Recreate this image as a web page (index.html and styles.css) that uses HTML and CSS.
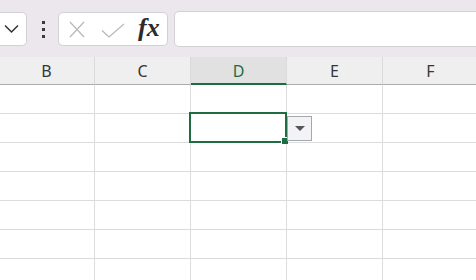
FILE: index.html
```html
<!DOCTYPE html>
<html lang="en">

<head>
    <meta charset="UTF-8">
    <meta name="viewport" content="width=device-width, initial-scale=1.0">
    <title>Sheet</title>
    <link rel="stylesheet" href="styles.css">
</head>

<body>

    <div class="toolbar">
        <div class="name-box">
            <svg width="16" height="10" viewBox="0 0 16 10">
                <polyline points="1,1.5 7.5,8 14,1.5" fill="none" stroke="#333" stroke-width="1.5" />
            </svg>
        </div>
        <div class="more-dots">
            <span></span><span></span><span></span>
        </div>
        <div class="fx-box">
            <svg class="icon-cancel" width="16" height="17" viewBox="0 0 16 17">
                <path d="M1 1 L15 16 M15 1 L1 16" stroke="#b9b9b9" stroke-width="1.3" fill="none" />
            </svg>
            <svg class="icon-enter" width="24" height="15" viewBox="0 0 24 15">
                <polyline points="1,7.5 8,14 23,1" fill="none" stroke="#b9b9b9" stroke-width="1.3" />
            </svg>
            <span class="fx-label">fx</span>
        </div>
        <div class="formula-input"></div>
    </div>

    <div class="sheet">
        <div class="col-head">B</div>
        <div class="col-head">C</div>
        <div class="col-head active">D</div>
        <div class="col-head">E</div>
        <div class="col-head">F</div>

        <div class="cell"></div><div class="cell"></div><div class="cell"></div><div class="cell"></div><div class="cell"></div>
        <div class="cell"></div><div class="cell"></div>
        <div class="cell selected">
            <!-- cursor de celda y boton de lista -->
            <div class="cell-cursor"><span class="fill-handle"></span></div>
            <div class="list-button"><span class="arrow"></span></div>
        </div>
        <div class="cell"></div><div class="cell"></div>
        <div class="cell"></div><div class="cell"></div><div class="cell"></div><div class="cell"></div><div class="cell"></div>
        <div class="cell"></div><div class="cell"></div><div class="cell"></div><div class="cell"></div><div class="cell"></div>
        <div class="cell"></div><div class="cell"></div><div class="cell"></div><div class="cell"></div><div class="cell"></div>
        <div class="cell"></div><div class="cell"></div><div class="cell"></div><div class="cell"></div><div class="cell"></div>
        <div class="cell"></div><div class="cell"></div><div class="cell"></div><div class="cell"></div><div class="cell"></div>
    </div>

</body>

</html>
```

FILE: styles.css
```css
body {
    margin: 0;
    font-family: 'Noto Sans', 'Open Sans', sans-serif;
    background-color: #ffffff;
    overflow: hidden;
}

.toolbar {
    display: flex;
    align-items: center;
    height: 57px;
    background-color: #ebe7ed;
    box-sizing: border-box;
    padding-top: 1px;
}

.name-box {
    width: 37px;
    height: 34px;
    margin-left: -10px;
    box-sizing: border-box;
    background-color: #ffffff;
    border: 1px solid #d3d0d6;
    border-radius: 5px;
    display: flex;
    align-items: center;
    padding-left: 13px;
}

.more-dots {
    display: flex;
    flex-direction: column;
    gap: 4px;
    margin-left: 15px;
    width: 3px;
}

.more-dots span {
    width: 3px;
    height: 3px;
    background-color: #3a3a3a;
}

.fx-box {
    width: 110px;
    height: 34px;
    margin-left: 13px;
    box-sizing: border-box;
    background-color: #ffffff;
    border: 1px solid #d3d0d6;
    border-radius: 5px;
    display: flex;
    align-items: center;
}

.icon-cancel {
    margin-left: 10px;
}

.icon-enter {
    margin-left: 16px;
    margin-top: 2px;
}

.fx-label {
    margin-left: 13px;
    font-family: 'Liberation Serif', 'DejaVu Serif', serif;
    font-style: italic;
    font-weight: bold;
    font-size: 26px;
    color: #2b2b2b;
    line-height: 1;
    margin-top: -3px;
}

.formula-input {
    flex: 1;
    height: 34px;
    margin-left: 6px;
    margin-right: -6px;
    background-color: #ffffff;
    border: 1px solid #d3d0d6;
    border-radius: 5px;
}

.sheet {
    display: grid;
    grid-template-columns: repeat(5, 96px);
    grid-auto-rows: 29px;
    grid-template-rows: 28px;
    margin-left: -1px;
}

.col-head {
    background-color: #efefef;
    border-right: 1px solid #dadada;
    border-bottom: 1px solid #acacac;
    display: flex;
    align-items: center;
    justify-content: center;
    font-size: 16px;
    color: #363636;
    padding-top: 1px;
}

.col-head.active {
    background-color: #e1e1e1;
    border-bottom: 2px solid #1e6c41;
    color: #1e6c41;
    padding-top: 2px;
}

.cell {
    border-right: 1px solid #dcdcdc;
    border-bottom: 1px solid #dcdcdc;
}

.cell.selected {
    position: relative;
}

.cell-cursor {
    position: absolute;
    left: -2px;
    top: -2px;
    right: -1px;
    bottom: -1px;
    border: 2px solid #1e6c41;
}

.fill-handle {
    position: absolute;
    right: -3px;
    bottom: -3px;
    width: 6px;
    height: 6px;
    background-color: #1e6c41;
    border-left: 1px solid #ffffff;
    border-top: 1px solid #ffffff;
}

.list-button {
    position: absolute;
    left: 96px;
    top: 2px;
    width: 25px;
    height: 25px;
    box-sizing: border-box;
    background-color: #f3f3f5;
    border: 1px solid #a3a7ae;
    display: flex;
    align-items: center;
    justify-content: center;
}

.arrow {
    width: 0;
    height: 0;
    border-left: 5px solid transparent;
    border-right: 5px solid transparent;
    border-top: 5px solid #555555;
}
```
